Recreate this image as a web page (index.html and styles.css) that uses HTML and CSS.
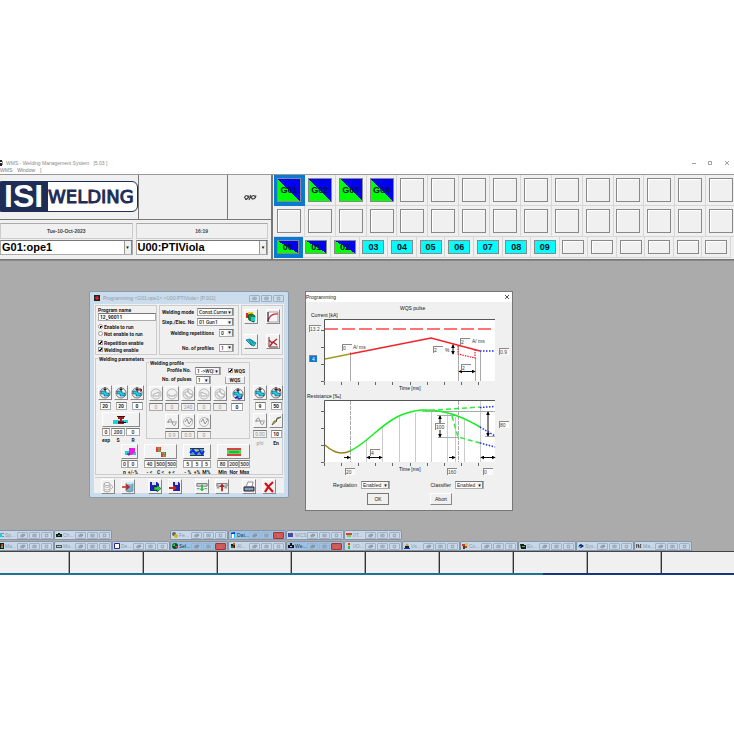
FILE: index.html
```html
<!DOCTYPE html>
<html lang="en">
<head>
<meta charset="utf-8">
<title>WMS - Welding Management System</title>
<link rel="stylesheet" href="styles.css">
</head>
<body>
<svg class="defs" aria-hidden="true">
  <symbol id="gun" viewBox="0 0 12 12"><circle cx="6" cy="6" r="5" fill="#f4f4f4" stroke="#555" stroke-width=".8"/><path d="M6 0v4M4.500 2.500h3" stroke="#222"/><path d="M2 4h5v2h3v3H5V7H2z" fill="#15d5dc" stroke="#126" stroke-width=".5"/></symbol>
  <symbol id="gun2" viewBox="0 0 12 12"><use href="#gun"/><path d="M3 10l2-1 2 2 3-1" stroke="#22d" fill="none" stroke-width="1.500"/></symbol>
  <symbol id="gun3" viewBox="0 0 12 12"><use href="#gun"/><path d="M6 3h5M9 1.500L11 3 9 4.500" stroke="#711" fill="none"/></symbol>
  <symbol id="ramp" viewBox="0 0 12 12"><circle cx="6" cy="6" r="5" fill="none" stroke="#aaa" stroke-width=".8"/><path d="M3 8h6V4L3 6.500z" fill="#fff" stroke="#999" stroke-width=".8"/></symbol>
  <symbol id="rampdown" viewBox="0 0 12 12"><circle cx="6" cy="6" r="5" fill="none" stroke="#aaa" stroke-width=".8"/><path d="M3 8h6L9 6.500 3 4z" fill="#fff" stroke="#999" stroke-width=".8"/></symbol>
  <symbol id="flat" viewBox="0 0 12 12"><circle cx="6" cy="6" r="5" fill="none" stroke="#aaa" stroke-width=".8"/><path d="M3 8V6M9 8V6M3 8h6" fill="none" stroke="#999" stroke-width=".8"/></symbol>
  <symbol id="dimgun" viewBox="0 0 12 12"><circle cx="6" cy="6" r="5" fill="none" stroke="#aaa" stroke-width=".8"/><path d="M6 1v3M3 4h4v2h3v3H5V7H3z" fill="#fff" stroke="#999" stroke-width=".8"/></symbol>
  <symbol id="wave" viewBox="0 0 12 12"><path d="M1 6h10M2 7q2-8 4-1t4 1" fill="none" stroke="#999"/></symbol>
  <symbol id="cycle" viewBox="0 0 12 12"><circle cx="6" cy="6" r="4.500" fill="none" stroke="#aaa" stroke-width=".8"/><path d="M3 6l2-3 2 5 2-3M8 3h2v2" fill="none" stroke="#888" stroke-width=".9"/></symbol>
  <symbol id="bolt" viewBox="0 0 12 12"><path d="M11 2L6 5l1 1-5 4 2-4 2 0L7 3z" fill="#e8d21a" stroke="#443" stroke-width=".7"/></symbol>
  <symbol id="valve" viewBox="0 0 24 12"><path d="M4 6h7v4H4zM13 6h6v3h-6z" fill="#15d5dc"/><path d="M9 3h6v2h-2v2h2v3H9V7h2V5H9z" fill="#a11b22"/><path d="M8 2.500h8M9 8.500h8" stroke="#311"/></symbol>
  <symbol id="pink" viewBox="0 0 12 12"><path d="M1 5h5v4H1zM9 6h3v3H9z" fill="#15d5dc"/><path d="M5 2h6v4L8 9H6l-2 1 1-4z" fill="#ec1ada"/><path d="M3 8h3" stroke="#224"/></symbol>
  <symbol id="steps" viewBox="0 0 24 12"><path d="M7 1h5v5H7z" fill="#e33"/><path d="M12 6h5v5h-5z" fill="#e33"/><path d="M8 2h3l-2 3h3M13 7h3l-2 3h3" fill="none" stroke="#3d6"/></symbol>
  <symbol id="tol" viewBox="0 0 24 12"><path d="M5 3h14v6H5z" fill="#42aeb2"/><path d="M5 2.500h14M5 9.500h14" stroke="#334"/><path d="M5 7l3-3 3 4 3-4 3 4 2-3" fill="none" stroke="#1a26ee" stroke-width="2"/><path d="M10 4l2 1 2-1" stroke="#fe0" fill="none"/></symbol>
  <symbol id="bars" viewBox="0 0 24 12"><path d="M5 2h14v2H5zM5 8h14v2H5z" fill="#d34442"/><path d="M5 4h14v4H5z" fill="#50db50"/><path d="M7 6h10" stroke="#185"/></symbol>
  <symbol id="cards" viewBox="0 0 12 12"><path d="M1 2h5v5H1z" fill="#e02727"/><path d="M3 1h5v4H3z" fill="#f3cb23"/><path d="M3 4l4-1 3 2-1 6-5-2z" fill="#168a38" stroke="#153"/><path d="M6 6h4v4H6z" fill="#14cbd4"/></symbol>
  <symbol id="graph" viewBox="0 0 12 12"><path d="M1 1v10h10V1z" fill="#f6f6fa" stroke="#777" stroke-width=".6"/><path d="M1 10Q3 2 11 3" fill="none" stroke="#d22" stroke-width="1.200"/><path d="M1 1v10" stroke="#225" fill="none"/></symbol>
  <symbol id="plane" viewBox="0 0 12 12"><path d="M1 4l4-1 6 4-2 3-3-1z" fill="#15cfda" stroke="#157" stroke-width=".7"/><path d="M4 4l3 5M6 4l3 4" stroke="#166" stroke-width=".7"/></symbol>
  <symbol id="redgraph" viewBox="0 0 12 12"><path d="M2 1v10h9" stroke="#633" fill="none"/><path d="M2 4l3 3 5-4M3 10l3-4 4 3" fill="none" stroke="#b11d22" stroke-width="1.300"/></symbol>
  <symbol id="db" viewBox="0 0 12 12"><path d="M2 3v7q3 2 6 0V3" fill="#fafafa" stroke="#aaa"/><ellipse cx="5" cy="3" rx="3" ry="1.500" fill="#fff" stroke="#aaa"/><path d="M2 5.500q3 2 6 0M2 8q3 2 6 0M9 4l2 2-2 2" stroke="#bbb" fill="none"/></symbol>
  <symbol id="dbin" viewBox="0 0 12 12"><path d="M4 2v8q3 2 7 0V2z" fill="#78b4d4" stroke="#478" stroke-width=".6"/><ellipse cx="7.500" cy="2" rx="3.500" ry="1.300" fill="#cce8f4"/><path d="M0 6h6M4 3.500L7 6 4 8.500" stroke="#c2261f" stroke-width="1.600" fill="none"/></symbol>
  <symbol id="diskout" viewBox="0 0 12 12"><path d="M1 1h7l2 2v7H1z" fill="#1722b8"/><path d="M3 1h4v3H3z" fill="#dde"/><path d="M5 6h3V4l4 3.500L8 11V9H5z" fill="#28d338" stroke="#131" stroke-width=".5"/></symbol>
  <symbol id="diskin" viewBox="0 0 12 12"><path d="M4 1h6l1 2v7H4z" fill="#1722b8"/><path d="M6 1h3v3H6z" fill="#dde"/><path d="M0 6h4V4l4 3-4 3V8H0z" fill="#d61f1f"/></symbol>
  <symbol id="down" viewBox="0 0 14 12"><path d="M1 2h12v3H1z" fill="#ddd" stroke="#333" stroke-width=".7"/><path d="M6 3h2v5h2l-3 3-3-3h2z" fill="#27b83c"/><path d="M1 8h3M10 8h3" stroke="#386"/></symbol>
  <symbol id="up" viewBox="0 0 14 12"><path d="M1 2h12v3H1z" fill="#ddd" stroke="#333" stroke-width=".7"/><path d="M6 11h2V6h2L7 2 4 6h2z" fill="#b61c1c"/><path d="M1 7h3M10 7h3" stroke="#464"/></symbol>
  <symbol id="print" viewBox="0 0 12 12"><path d="M5 1h5l-1 5H3z" fill="#fff" stroke="#667" stroke-width=".7"/><path d="M1 6h10v4H1z" fill="#889" stroke="#223"/><path d="M2 8h8" stroke="#7bd"/></symbol>
  <symbol id="cross" viewBox="0 0 12 12"><path d="M2 2l8 9M10 1q-5 4-8 10" stroke="#d0111b" stroke-width="2.200" fill="none"/></symbol>
  <symbol id="b-res" viewBox="0 0 8 6"><path d="M2 2.500h3v2H2zM3.500 2.500v-1h3v2H5" fill="none" stroke="#6f7c8a" stroke-width=".8"/></symbol>
  <symbol id="b-max" viewBox="0 0 8 6"><path d="M2 1.500h4v3H2zM3 3h2" fill="none" stroke="#7f8c9a" stroke-width=".8"/></symbol>
  <symbol id="b-cls" viewBox="0 0 8 6"><path d="M2.500 1.500h3v3h-3z" fill="none" stroke="#7f8c9a" stroke-width=".8"/></symbol>
  <marker id="ah" viewBox="0 0 6 6" refX="5" refY="3" markerWidth="4" markerHeight="4" orient="auto-start-reverse"><path d="M0 0l6 3-6 3z"/></marker>
</svg>

<div class="app">
  <header class="titlebar">
    <svg class="appicon" viewBox="0 0 4 6"><path d="M0 0h2v2H0zM0 3h2v3H0z" fill="#222"/><path d="M2 1h1v4H2z" fill="#999"/></svg>
    <span class="apptitle">WMS - Welding Management System&nbsp;&nbsp; [5.03 ]</span>
    <svg class="syscontrols" viewBox="0 0 40 6"><path d="M1 3.500h4M17.500 1.500h3v3h-3zM34 1l4 4M38 1l-4 4" fill="none" stroke="#888" stroke-width=".8"/></svg>
  </header>
  <nav class="menubar"><a href="#">WMS</a><a href="#">Window</a><a href="#">]</a></nav>

  <section class="head">
    <div class="head-left">
      <div class="brandrow">
        <div class="brand"><div class="logo"><b>ISI</b><span>WELDING</span></div></div>
        <div class="cell"></div>
        <div class="cell link"><svg viewBox="0 0 14 7"><path d="M1.500 3.500q2-4 4 0-2 3-4 0zM8 3.500q3-4 4.500 0-2 3-4.500 0zM6 6l2-5M2 5.500q3 0 4-4M9 5.500q3 0 4-4" fill="none" stroke="#444" stroke-width="1.200"/></svg></div>
      </div>
      <div class="inforow">
        <div class="info">Tue-10-Oct-2023</div><div class="info">16:19</div>
        <span class="combo big"><select aria-label="Group"><option>G01:ope1</option></select></span>
        <span class="combo big"><select aria-label="Unit"><option>U00:PTIViola</option></select></span>
      </div>
    </div>
    <div class="head-right">
      <div class="slots">
        <div class="sel"><button class="on">G01</button></div><div><button class="on">G02</button></div><div><button class="on">G03</button></div><div><button class="on">G04</button></div><div><button></button></div><div><button></button></div><div><button></button></div><div><button></button></div><div><button></button></div><div><button></button></div><div><button></button></div><div><button></button></div><div><button></button></div><div><button></button></div><div><button></button></div>
        <div><button></button></div><div><button></button></div><div><button></button></div><div><button></button></div><div><button></button></div><div><button></button></div><div><button></button></div><div><button></button></div><div><button></button></div><div><button></button></div><div><button></button></div><div><button></button></div><div><button></button></div><div><button></button></div><div><button></button></div>
      </div>
      <div class="units">
        <div class="sel"><button class="on">00</button></div><div><button class="on">01</button></div><div><button class="on">02</button></div><div><button class="cy">03</button></div><div><button class="cy">04</button></div><div><button class="cy">05</button></div><div><button class="cy">06</button></div><div><button class="cy">07</button></div><div><button class="cy">08</button></div><div><button class="cy">09</button></div><div><button></button></div><div><button></button></div><div><button></button></div><div><button></button></div><div><button></button></div><div><button></button></div>
      </div>
    </div>
  </section>

  <main class="desk">
    <section class="win prog">
      <header class="wtitle"><svg viewBox="0 0 6 6"><path d="M0 0h6v6H0z" fill="#222"/><path d="M1 2l3-1 1 3-3 1z" fill="#d22"/></svg><span>Programming &lt;G01:ope1&gt; &lt;U00:PTIViola&gt; [P.001]</span><i><svg><use href="#b-max"/></svg></i><i><svg><use href="#b-max"/></svg></i><i><svg><use href="#b-cls"/></svg></i></header>
      <div class="pbody">
        <div class="top">
          <div class="box ident">
            <label for="pn">Program name</label>
            <input id="pn" value="12_90011">
            <label class="opt"><input type="radio" name="en" checked>Enable to run</label>
            <label class="opt"><input type="radio" name="en">Not enable to run</label>
            <label class="opt gap"><input type="checkbox" checked>Repetition enable</label>
            <label class="opt"><input type="checkbox" checked>Welding enable</label>
          </div>
          <div class="box modes">
            <label class="m0">Welding mode<span class="combo w37"><select><option>Const.Current</option></select></span></label>
            <label class="m0">Step./Elec. No<span class="combo w37"><select><option>01 Gun1</option></select></span></label>
            <label>Welding repetitions<span class="combo w15"><select><option>0</option></select></span></label>
            <label class="last">No. of profiles<span class="combo w15"><select><option>1</option></select></span></label>
          </div>
          <div class="box shortcuts">
            <button class="ib" aria-label="Programs"><svg><use href="#cards"/></svg></button><button class="ib" aria-label="Curve"><svg><use href="#graph"/></svg></button>
            <button class="ib" aria-label="Guns"><svg><use href="#plane"/></svg></button><button class="ib" aria-label="Limits"><svg><use href="#redgraph"/></svg></button>
          </div>
        </div>

        <fieldset class="params">
          <legend>Welding parameters</legend>
          <div class="prow">
            <div class="pleft">
              <div class="trip">
                <button class="ib" aria-label="Squeeze"><svg><use href="#gun"/></svg></button><button class="ib" aria-label="Pressure"><svg><use href="#gun"/></svg></button><button class="ib" aria-label="Hold"><svg><use href="#gun3"/></svg></button>
                <input aria-label="Squeeze time" value="20"><input aria-label="Pressure time" value="20"><input aria-label="Hold time" value="0">
              </div>
              <div class="valve">
                <button class="ib wide" aria-label="Valve"><svg><use href="#valve"/></svg></button>
                <input aria-label="exp" value="0"><input aria-label="S" value="200"><input aria-label="R" value="0">
                <span>exp</span><span>S</span><span>R</span>
              </div>
            </div>
            <fieldset class="profile">
              <legend>Welding profile</legend>
              <div class="pf"><label>Profile No.<span class="combo w25"><select><option>1 -&gt;WQS</option></select></span></label><label class="opt"><input type="checkbox" checked>WQS</label></div>
              <div class="pf"><label>No. of pulses<span class="combo w15"><select><option>1</option></select></span></label><button class="wqs">WQS</button></div>
              <div class="six">
                <button class="ib" aria-label="Upslope"><svg><use href="#ramp"/></svg></button><button class="ib" aria-label="Pre"><svg><use href="#flat"/></svg></button><button class="ib" aria-label="Weld"><svg><use href="#dimgun"/></svg></button><button class="ib" aria-label="Downslope"><svg><use href="#rampdown"/></svg></button><button class="ib" aria-label="Post"><svg><use href="#dimgun"/></svg></button><button class="ib" aria-label="Cold"><svg><use href="#gun2"/></svg></button>
                <input class="dim" aria-label="Up" value="0"><input class="dim" aria-label="Pre time" value="0"><input class="dim" aria-label="Weld time" value="240"><input class="dim" aria-label="Down" value="0"><input class="dim" aria-label="Post time" value="0"><input aria-label="Cold time" value="0">
              </div>
              <div class="six second">
                <i></i><button class="ib" aria-label="Wave"><svg><use href="#wave"/></svg></button><button class="ib" aria-label="Cycle"><svg><use href="#cycle"/></svg></button><button class="ib" aria-label="Current"><svg><use href="#cycle"/></svg></button><i></i><i></i>
                <i></i><input class="dim" aria-label="kA" value="0.9"><input class="dim" aria-label="kA end" value="0.0"><input class="dim" aria-label="Cycles" value="0"><i></i><i></i>
              </div>
            </fieldset>
            <div class="pright">
              <button class="ib" aria-label="Hold gun"><svg><use href="#gun"/></svg></button><button class="ib" aria-label="Release gun"><svg><use href="#gun3"/></svg></button>
              <input aria-label="Hold gun time" value="9"><input aria-label="Release time" value="50">
              <button class="ib r2" aria-label="Phase"><svg><use href="#wave"/></svg></button><button class="ib r2" aria-label="Energy"><svg><use href="#bolt"/></svg></button>
              <input class="dim" aria-label="phi" value="0.00"><input aria-label="En" value="10">
              <span class="dim">phi</span><span>En</span>
            </div>
          </div>
          <div class="limits">
            <div class="lim two"><button class="ib wide" aria-label="Offset"><svg><use href="#pink"/></svg></button><input aria-label="n" value="0"><input aria-label="plus minus" value="0"><span>n</span><span>+/-%</span></div>
            <div class="lim"><button class="ib wide" aria-label="Steps"><svg><use href="#steps"/></svg></button><input aria-label="C minus" value="40"><input aria-label="C" value="500"><input aria-label="C plus" value="500"><span>- &lt;</span><span>C &lt;</span><span>+ &lt;</span></div>
            <div class="lim"><button class="ib wide" aria-label="Tolerance"><svg><use href="#tol"/></svg></button><input aria-label="minus" value="5"><input aria-label="plus" value="5"><input aria-label="M" value="5"><span>- %</span><span>+%</span><span>M%</span></div>
            <div class="lim"><button class="ib wide" aria-label="Range"><svg><use href="#bars"/></svg></button><input aria-label="Min" value="80"><input aria-label="Nor" value="200"><input aria-label="Max" value="500"><span>Min</span><span>Nor</span><span>Max</span></div>
          </div>
        </fieldset>

        <div class="tools">
          <div><button class="ib" aria-label="Database"><svg><use href="#db"/></svg></button><button class="ib" aria-label="Load"><svg><use href="#dbin"/></svg></button></div>
          <div><button class="ib" aria-label="Export"><svg><use href="#diskout"/></svg></button><button class="ib" aria-label="Import"><svg><use href="#diskin"/></svg></button></div>
          <div><button class="ib" aria-label="Download"><svg><use href="#down"/></svg></button><button class="ib" aria-label="Upload"><svg><use href="#up"/></svg></button></div>
          <div><button class="ib" aria-label="Print"><svg><use href="#print"/></svg></button><button class="ib" aria-label="Cancel"><svg><use href="#cross"/></svg></button></div>
        </div>
      </div>
    </section>

    <section class="win dlg">
      <header class="dtitle"><span>Programming</span><svg viewBox="0 0 6 6"><path d="M1 1l4 4M5 1L1 5" stroke="#222" stroke-width=".8"/></svg></header>
      <div class="chart">
        <svg viewBox="306 302 206 89">
          <path d="M325 320H495V381H325z" fill="#fff"/>
          <path d="M350.500 352v29M458.500 346v35M475.500 358v23M480.500 351v30" stroke="#aaa"/>
          <path d="M324.500 381.500v-62H495" fill="none" stroke="#555"/>
          <path d="M321 330.500h3M321 347.500h3M321 364.500h3M321 381.500h3M324.500 382v3M341.500 382v3M358.500 382v3M375.500 382v3M392.500 382v3M410.500 382v3M427.500 382v3M444.500 382v3M461.500 382v3M478.500 382v3" stroke="#666"/>
          <path d="M325 329H495" stroke="#ff7474" stroke-width="2" stroke-dasharray="13 4"/>
          <path d="M325 359l25-5" stroke="#a09a1c" stroke-width="1.500"/>
          <path d="M350 354l81-16 49 13" fill="none" stroke="#f4202a" stroke-width="1.500"/>
          <path d="M458 346v8l17 4v-8" fill="none" stroke="#f4202a" stroke-width="1.200" stroke-dasharray="1.500 1"/>
          <path d="M480 351h15" stroke="#2233f5" stroke-dasharray="1.500 1.500" stroke-width="1.300"/>
          <path class="arrow both" d="M453 345v9"/><path class="arrow both" d="M459 371.500h16"/>
          <g class="t"><text x="400" y="310">WQS pulse</text><text x="311" y="317">Current [kA]</text><text x="399" y="390">Time [ms]</text></g>
          <g class="s"><text x="353" y="349">A/ ms</text><text x="472" y="343">A/ ms</text><text x="445" y="352">%</text></g>
        </svg>
        <input class="f c1" aria-label="Maximum current" value="13.2"><input class="f c2" aria-label="Start current" value="4"><input class="f c3" aria-label="Rise" value="0"><input class="f c4" aria-label="Band" value="2"><input class="f c5" aria-label="Fall" value="2"><input class="f c6" aria-label="Duration" value="2"><input class="f c7" aria-label="End current" value="0.9">
      </div>
      <div class="chart">
        <svg viewBox="306 391 206 84">
          <path d="M325 401H495V462H325z" fill="#fff"/>
          <path d="M366.500 440v22M382.500 427v35M399.500 417v45M415.500 413v49M431.500 411v51M447.500 414v48M455.500 417v45M464.500 420v42M480.500 401v61" stroke="#ccc"/>
          <path d="M350.500 401v61M458.500 401v61" stroke="#aaa" stroke-dasharray="4 1"/>
          <path d="M425 411.500h70M437 415.500h18M438 437.500h20M485 436.500h10" stroke="#aaa"/>
          <path d="M324.500 462.500v-62H495" fill="none" stroke="#555"/>
          <path d="M321 411.500h3M321 428.500h3M321 445.500h3M321 462.500h3M324.500 463v3M341.500 463v3M358.500 463v3M375.500 463v3M392.500 463v3M410.500 463v3M427.500 463v3M444.500 463v3M461.500 463v3M478.500 463v3" stroke="#666"/>
          <path d="M325 445q13 12 25 6" fill="none" stroke="#978418" stroke-width="1.500"/>
          <path d="M350 451C366 444 379 426 397 417S430 409 444 412S470 421 480 427" fill="none" stroke="#15f020" stroke-width="1.500"/>
          <path d="M422 411l58-4M452 416l6 21 22 6" fill="none" stroke="#31ea3b" stroke-width="1.500" stroke-dasharray="5 3"/>
          <path d="M480 407.500l15-1M480 427l15 9M480 443l15 4" stroke="#2233f5" stroke-width="1.500" stroke-dasharray="1.500 1.500"/>
          <path class="arrow both" d="M440 416v21"/><path class="arrow both" d="M488 412v24"/><path class="arrow both" d="M367 457.500h15"/><path class="arrow both" d="M481 457.500h14"/>
          <path class="arrow" d="M344 457.500h6"/><path class="arrow" d="M449 457.500h6"/>
          <g class="t"><text x="307" y="398">Resistance [‰]</text><text x="399" y="471">Time [ms]</text></g>
        </svg>
        <input class="f r1" aria-label="Start window" value="20"><input class="f r2" aria-label="Step" value="4"><input class="f r3" aria-label="Drop" value="100"><input class="f r4" aria-label="Drop time" value="160"><input class="f r5" aria-label="Tail" value="0"><input class="f r6" aria-label="Tolerance" value="80">
      </div>
      <div class="dform"><label>Regulation<span class="combo w29"><select><option>Enabled</option></select></span></label><label>Classifier<span class="combo w29"><select><option>Enabled</option></select></span></label></div>
      <div class="dbtns"><button class="ok">OK</button><button>Abort</button></div>
    </section>

    <div class="mdis">
      <div class="mdi"><svg viewBox="0 0 6 6"><path d="M1 1h5v1H1z" fill="#e55"/><path d="M1 4h5v1H1z" fill="#1bc"/><path d="M2 1h2v4H2z" fill="#2cd"/></svg><span>Sp...</span><i><svg><use href="#b-res"/></svg></i><i><svg><use href="#b-max"/></svg></i><i><svg><use href="#b-cls"/></svg></i></div>
      <div class="mdi"><svg viewBox="0 0 6 6"><path d="M0 2h6v3H0zM2 1h2v1H2z" fill="#121"/><path d="M2 3h2v1H2z" fill="#3a6"/></svg><span>Ch...</span><i><svg><use href="#b-res"/></svg></i><i><svg><use href="#b-max"/></svg></i><i><svg><use href="#b-cls"/></svg></i></div>
      <div class="none"></div>
      <div class="mdi"><svg viewBox="0 0 6 6"><circle cx="2" cy="2" r="2" fill="#665"/><circle cx="4" cy="4" r="2" fill="#cb2"/></svg><span>Fe...</span><i><svg><use href="#b-res"/></svg></i><i><svg><use href="#b-max"/></svg></i><i><svg><use href="#b-cls"/></svg></i></div>
      <div class="mdi act"><svg viewBox="0 0 6 6"><path d="M1 0h4v6H1z" fill="#1ce"/><path d="M2 2h2v4H2z" fill="#fff"/><path d="M1 1l4-1v2H1z" fill="#13d"/></svg><span>Dat...</span><i><svg><use href="#b-res"/></svg></i><i><svg><use href="#b-max"/></svg></i><i><svg><use href="#b-cls"/></svg></i></div>
      <div class="mdi"><svg viewBox="0 0 6 6"><path d="M0 1h5v4H0z" fill="#15c"/><path d="M0 1h2l3 3v1z" fill="#d23"/></svg><span>WCS</span><i><svg><use href="#b-res"/></svg></i><i><svg><use href="#b-max"/></svg></i><i><svg><use href="#b-cls"/></svg></i></div>
      <div class="mdi"><svg viewBox="0 0 6 6"><path d="M0 1h6v2H0z" fill="#e33"/><path d="M1 3h4v2H1z" fill="#6d5"/></svg><span>I/T...</span><i><svg><use href="#b-res"/></svg></i><i><svg><use href="#b-max"/></svg></i><i><svg><use href="#b-cls"/></svg></i></div>
      <div class="none"></div><div class="none"></div><div class="none"></div><div class="none"></div><div class="none"></div>
      <div class="mdi"><svg viewBox="0 0 6 6"><path d="M0 0h6v6H0z" fill="#121"/><path d="M3 1h2v2H3z" fill="#d33"/><path d="M3 3h2v2H3z" fill="#4b4"/></svg><span>Ma...</span><i><svg><use href="#b-res"/></svg></i><i><svg><use href="#b-max"/></svg></i><i><svg><use href="#b-cls"/></svg></i></div>
      <div class="mdi"><svg viewBox="0 0 6 6"><path d="M0 2h6v3H0z" fill="#456"/><path d="M1 3h4v1H1z" fill="#cca"/></svg><span>Mo...</span><i><svg><use href="#b-res"/></svg></i><i><svg><use href="#b-max"/></svg></i><i><svg><use href="#b-cls"/></svg></i></div>
      <div class="mdi"><svg viewBox="0 0 6 6"><path d="M.500 .500h5v5h-5z" fill="#fff" stroke="#22a"/></svg><span>De...</span><i><svg><use href="#b-res"/></svg></i><i><svg><use href="#b-max"/></svg></i><i><svg><use href="#b-cls"/></svg></i></div>
      <div class="mdi act"><svg viewBox="0 0 6 6"><circle cx="3" cy="3" r="3" fill="#142"/><path d="M3 0v3H0z" fill="#2c6"/><path d="M3 3h3L4 5z" fill="#e44"/></svg><span>Sel...</span><i><svg><use href="#b-res"/></svg></i><i><svg><use href="#b-max"/></svg></i><i><svg><use href="#b-cls"/></svg></i></div>
      <div class="mdi"><svg viewBox="0 0 6 6"><path d="M1 1h4v4H1z" fill="#221"/><path d="M3 0h2v2H3z" fill="#d52"/><path d="M1 3h3v2H1z" fill="#363"/></svg><span>Al...</span><i><svg><use href="#b-res"/></svg></i><i><svg><use href="#b-max"/></svg></i><i><svg><use href="#b-cls"/></svg></i></div>
      <div class="mdi act"><svg viewBox="0 0 6 6"><path d="M0 2h6v3H0zM2 0h2v2H2z" fill="#112"/><path d="M2 3h2v1H2z" fill="#ccd"/></svg><span>We...</span><i><svg><use href="#b-res"/></svg></i><i><svg><use href="#b-max"/></svg></i><i><svg><use href="#b-cls"/></svg></i></div>
      <div class="mdi"><svg viewBox="0 0 6 6"><path d="M2 0h2v2H2z" fill="#e33"/><path d="M2 2h2v1H2z" fill="#dc3"/><path d="M2 3h2v3H2z" fill="#3b4"/></svg><span>I/O...</span><i><svg><use href="#b-res"/></svg></i><i><svg><use href="#b-max"/></svg></i><i><svg><use href="#b-cls"/></svg></i></div>
      <div class="mdi"><svg viewBox="0 0 6 6"><circle cx="3" cy="2" r="1.500" fill="#c96"/><path d="M0 5h6v1H0z" fill="#13c"/><path d="M1 3h4v2H1z" fill="#122"/></svg><span>Us...</span><i><svg><use href="#b-res"/></svg></i><i><svg><use href="#b-max"/></svg></i><i><svg><use href="#b-cls"/></svg></i></div>
      <div class="mdi"><svg viewBox="0 0 6 6"><path d="M0 1h3v2H0z" fill="#d33"/><path d="M3 0h3v3H3z" fill="#dc3"/><path d="M1 3h2v3H1z" fill="#343"/><path d="M3 3h2v2H3z" fill="#c42"/></svg><span>Co...</span><i><svg><use href="#b-res"/></svg></i><i><svg><use href="#b-max"/></svg></i><i><svg><use href="#b-cls"/></svg></i></div>
      <div class="mdi"><svg viewBox="0 0 6 6"><path d="M0 1h4v1h2v4H1z" fill="#121"/><path d="M2 3h3v1H2z" fill="#797"/></svg><span>Ex...</span><i><svg><use href="#b-res"/></svg></i><i><svg><use href="#b-max"/></svg></i><i><svg><use href="#b-cls"/></svg></i></div>
      <div class="mdi"><svg viewBox="0 0 6 6"><path d="M1 2l2-1 3 2-3 2-2-1z" fill="#126"/><path d="M0 3h3v1H0z" fill="#2ad"/></svg><span>Sys...</span><i><svg><use href="#b-res"/></svg></i><i><svg><use href="#b-max"/></svg></i><i><svg><use href="#b-cls"/></svg></i></div>
      <div class="mdi"><svg viewBox="0 0 6 6"><path d="M0 1l1 2-1 2M2 1l1 4M5 1l-1 2 1 2" fill="none" stroke="#333"/></svg><span>Ma...</span><i><svg><use href="#b-res"/></svg></i><i><svg><use href="#b-max"/></svg></i><i><svg><use href="#b-cls"/></svg></i></div>
    </div>
  </main>
  <footer class="keys"><button aria-label="F1"></button><button aria-label="F2"></button><button aria-label="F3"></button><button aria-label="F4"></button><button aria-label="F5"></button><button aria-label="F6"></button><button aria-label="F7"></button><button aria-label="F8"></button><button aria-label="F9"></button><button aria-label="F10"></button></footer>
  <div class="edge"></div>
</div>
</body>
</html>
```
FILE: styles.css
```css
* { box-sizing: border-box; }
body { margin: 0; background: #fff; font: 5px/6px "Liberation Sans", sans-serif; color: #222; }
button, input, select { font: inherit; color: inherit; margin: 0; padding: 0; border-radius: 0; }
i { font-style: normal; }
.defs { position: absolute; width: 0; height: 0; }
.app { padding-top: 158px; overflow: hidden; }

.titlebar { display: flex; align-items: center; gap: 2px; height: 9px; color: #8a8a8a; }
.appicon { width: 4px; height: 6px; }
.apptitle { flex: 1; font-family: "Liberation Sans", sans-serif; }
.syscontrols { width: 40px; height: 6px; margin-right: 3px; }
.menubar { display: flex; gap: 5px; height: 7px; }
.menubar a { color: #777; text-decoration: none; }

.head { display: flex; height: 86px; background: #f0f0f0; border-top: 1px solid #999; border-bottom: 1px solid #777; }
.head-left { flex: none; width: 273px; display: flex; flex-direction: column; border-right: 2px solid #777; }
.brandrow { display: flex; height: 45px; border-bottom: 1px solid #777; }
.brand { width: 139px; border-right: 1px solid #777; padding-top: 6px; }
.logo { display: flex; align-items: center; height: 31px; margin-left: -4px; border: 1px solid #1e2c56; border-radius: 6px; background: #fff; color: #1e2c56; }
.logo b { width: 51px; height: 29px; padding-left: 7px; border-radius: 4px 0 0 4px; background: #1e2c56; color: #fff; font-size: 32px; line-height: 29px; }
.logo span { font: 18px/30px "DejaVu Sans", sans-serif; -webkit-text-stroke: 1px #1e2c56; }
.cell { width: 89px; border-right: 1px solid #777; }
.cell.link { flex: 1; border: 0; display: flex; align-items: center; justify-content: center; }
.link svg { width: 14px; height: 7px; }
.inforow { display: grid; grid-template-columns: 1fr 1fr; grid-template-rows: 16px 15px; gap: 1px 3px; padding: 3px 3px 0 0; }
.info { border: 1px solid #ccc; border-top-color: #aaa; text-align: center; line-height: 14px; font-weight: bold; color: #444; }

.combo { position: relative; display: inline-flex; height: 8px; background: #fff; border: 1px solid #aaa; border-top-color: #777; }
.combo select { appearance: none; width: 100%; border: 0; background: transparent; padding-left: 1px; line-height: 6px; }
.combo::after { content: "▾"; position: absolute; right: 0; top: 0; bottom: 0; width: 5px; display: flex; align-items: center; justify-content: center; background: #f0f0f0; border-right: 1px solid #888; font: 5px/5px "DejaVu Sans", sans-serif; color: #000; pointer-events: none; }
.combo.big { height: 15px; font-size: 11px; font-weight: bold; color: #000; }
.combo.big::after { border-left: 1px solid #999; width: 6px; }
.combo.big select { line-height: 13px; }
.w37 { width: 37px; } .w29 { width: 29px; } .w25 { width: 26px; } .w15 { width: 15px; }

.head-right { flex: 1; min-width: 0; padding-left: 1px; }
.slots { display: grid; grid-template-columns: repeat(15, 1fr); grid-auto-rows: 31px; margin-right: -3px; }
.units { display: grid; grid-template-columns: repeat(16, 1fr); grid-auto-rows: 21px; margin-right: 3px; }
.slots > div, .units > div { display: flex; align-items: center; justify-content: center; border: solid #d6d6d6; border-width: 0 1px 1px 0; }
.slots button { width: 24px; height: 24px; }
.units button { width: 22px; height: 14px; }
.slots button, .units button { border: 1px solid #888; background: #f0f0f0; box-shadow: inset 1px 1px #fff; font: bold 9px/10px "Liberation Sans", sans-serif; color: #012; }
.slots button.on, .units button.on { background: linear-gradient(to top right, #0f0 50%, #0000f5 50%); box-shadow: none; color: #00163c; }
.units button.cy { background: #0ff; box-shadow: none; }
.slots .sel, .units .sel { background: #0b78d2; border-color: #0b78d2; }

.desk { position: relative; height: 291px; background: #ababab; border-top: 1px solid #888; overflow: hidden; display: flex; flex-direction: column; justify-content: flex-end; }
.win { position: absolute; top: 30px; }
.prog { left: 89px; width: 200px; padding: 0 4px 4px; background: #cbdcec; border: 1px solid #8a9aab; border-radius: 2px; }
.wtitle { display: flex; align-items: center; height: 12px; gap: 1px; color: #8f9baa; }
.wtitle > svg { width: 6px; height: 6px; }
.wtitle span { flex: 1; padding-left: 2px; white-space: nowrap; }
.wtitle i { width: 11px; height: 7px; border: 1px solid #9fb0c2; border-radius: 1px; }
.wtitle i svg { display: block; width: 9px; height: 5px; }
.pbody { background: #f0f0f0; font-weight: bold; height: 189px; padding: 1px; font-family: Roboto, "Liberation Sans", sans-serif; }
.pbody input { background: #fff; border: 1px solid #aaa; border-top-color: #777; height: 8px; min-width: 0; width: 100%; text-align: center; line-height: 6px; }
.pbody select, .pbody .lim input, .pbody .valve input { font-weight: 500; }
.top { display: grid; grid-template-columns: 62px 1fr 42px; gap: 2px; height: 49px; }
.box { border: 1px solid #ccc; }
.ident { display: flex; flex-direction: column; padding: 1px 2px; }
.ident > label:first-child { line-height: 6px; }
#pn { text-align: left; padding-left: 1px; width: 58px; flex: none; margin-bottom: 2px; }
.opt { display: flex; align-items: center; gap: 1px; height: 7px; }
.opt.gap { margin-top: 2px; }
.pbody .opt input { appearance: none; flex: none; width: 5px; height: 5px; border: 1px solid #999; }
.pbody .opt input[type=radio] { border-radius: 50%; }
.pbody .opt input[type=radio]:checked { background: radial-gradient(circle, #111 1px, #fff 1px); }
.pbody .opt input[type=checkbox]:checked { background: linear-gradient(135deg, #fff 40%, #111 40%, #111 70%, #fff 70%); }
.modes { display: flex; flex-direction: column; justify-content: space-between; padding: 2px 4px; }
.modes label { display: flex; justify-content: flex-end; align-items: center; gap: 5px; }
.modes .m0 { justify-content: space-between; gap: 0; padding-left: 0; white-space: nowrap; margin-left: -2px; }
.modes .last { margin-top: 5px; }
.shortcuts { display: grid; grid-template-columns: 14px 14px; gap: 10px 8px; padding: 3px 2px; align-content: start; }

.ib { display: flex; align-items: center; justify-content: center; width: 14px; height: 15px; background: #f2f2f2; border: solid; border-width: 1px; border-color: #fff #888 #888 #fff; }
.ib svg { width: 12px; height: 12px; flex: none; }
.ib.wide { width: 100%; }
.ib.wide svg { width: 24px; }
.two .ib.wide svg { width: 14px; }

.params { position: relative; margin: 4px 0 0; border: 1px solid #ccc; padding: 0; height: 117px; min-width: 0; }
.params legend { position: absolute; top: -3px; left: 2px; padding: 0 1px; background: #f0f0f0; line-height: 6px; }
.prow { display: grid; grid-template-columns: 50px 104px 1fr; height: 83px; padding-top: 3px; }
.trip { display: grid; grid-template-columns: repeat(3, 14px); gap: 2px; padding: 23px 0 0 2px; }
.trip input, .pright input { width: 11px; justify-self: center; }
.valve { display: grid; grid-template-columns: 8px 14px 14px; gap: 1px; padding: 2px 0 0 6px; text-align: center; }
.valve .ib, .lim .ib { grid-column: 1 / -1; }
.valve input { justify-self: stretch; }
.profile { position: relative; margin: 0; padding: 4px 2px 0; border: 1px solid #ccc; height: 77px; min-width: 0; }
.profile legend { left: 2px; }
.pf { display: flex; justify-content: space-between; height: 9px; padding-right: 2px; }
.pf > label:first-child { display: flex; align-items: flex-start; gap: 4px; width: 72px; padding-left: 18px; white-space: nowrap; }
.pf + .pf > label:first-child { padding-left: 13px; }
.wqs { width: 20px; height: 8px; border: 1px solid #aaa; border-top-color: #fff; background: #f0f0f0; line-height: 6px; }
.six { display: grid; grid-template-columns: repeat(5, 14px) 14px; gap: 2px; padding-top: 1px; }
.six > :nth-child(6n) { margin-left: 2px; }
.six > input:nth-child(6n) { width: 12px; }
.six.second { padding-top: 3px; }
.pbody .dim { color: #999; background: #f0f0f0; font-weight: normal; }
.pright { display: grid; grid-template-columns: 14px 14px; gap: 2px; padding: 23px 0 0 3px; align-content: start; justify-content: start; text-align: center; }
.pright .r2 { margin-top: 1px; }
.pbody .pright .dim { width: 14px; }
.limits { display: grid; grid-template-columns: 17px 33px 28px 33px; justify-content: start; column-gap: 6px; padding: 2px 0 0 25px; }
.limits .lim { display: grid; grid-template-columns: repeat(3, 1fr); row-gap: 1px; text-align: center; }
.limits .two { grid-template-columns: 1fr 1fr; }
.lim span { white-space: nowrap; justify-self: center; }
.tools { display: flex; gap: 13px; margin-top: 2px; border-top: 1px solid #ccc; padding: 1px 0 0 6px; }
.tools div { display: flex; gap: 6px; }

.dlg { left: 305px; width: 208px; border: 1px solid #777; background: #f0f0f0; }
.dtitle { display: flex; justify-content: space-between; align-items: center; height: 10px; padding: 0 2px 0 0; background: #fff; }
.dtitle svg { width: 6px; height: 6px; }
.chart { position: relative; }
.chart svg { display: block; width: 100%; }
.chart .t { font-size: 5px; fill: #111; }
.chart .s { font-size: 5px; fill: #333; }
.arrow { stroke: #111; fill: none; marker-end: url(#ah); }
.arrow.both { marker-start: url(#ah); }
.f { position: absolute; width: 10px; height: 7px; border: solid #888; border-width: 1px 0 0 1px; background: #fafafa; line-height: 6px; color: #444; }
.c1 { left: 3px; top: 23px; width: 12px; } .c2 { left: 3px; top: 53px; background: #0b78d2; color: #fff; width: 8px; padding-left: 2px; }
.c3 { left: 36px; top: 42px; } .c4 { left: 127px; top: 44px; } .c5 { left: 154px; top: 36px; } .c6 { left: 155px; top: 62px; } .c7 { left: 193px; top: 46px; }
.r1 { left: 39px; top: 77px; } .r2.f { left: 64px; top: 58px; } .r3 { left: 129px; top: 32px; } .r4 { left: 141px; top: 77px; } .r5 { left: 177px; top: 77px; } .r6 { left: 193px; top: 30px; }
.dform { display: flex; justify-content: space-between; padding: 6px 28px 0 27px; }
.dform label { display: flex; align-items: center; gap: 0; }
.dform .combo { margin-left: -1px; }
.dform label .combo { margin-left: 0; }
.dform label { gap: 4px; }
.dbtns { display: flex; gap: 41px; padding: 4px 0 5px 61px; }
.dbtns button { width: 22px; height: 12px; background: #f0f0f0; border: 1px solid #888; border-color: #fff #888 #888 #fff; }
.dbtns .ok { border-color: #777; }

.mdis { display: grid; grid-template-columns: repeat(12, 58px); grid-auto-rows: 10px; row-gap: 1px; margin-left: -4px; }
.mdi { display: flex; align-items: center; gap: 1px; padding: 0 1px; background: #c8d8e8; border: 1px solid #8796a6; border-radius: 2px 2px 0 0; }
.mdi > svg { width: 6px; height: 6px; flex: none; }
.mdi span { flex: 1; color: #8d9aa9; white-space: nowrap; min-width: 0; }
.mdi i { width: 11px; height: 7px; border: 1px solid #a2b2c4; border-radius: 1px; flex: none; }
.mdi i svg { display: block; width: 9px; height: 5px; }
.mdi.act { background: #9dc1e2; }
.mdi.act span { color: #234; }
.mdi.act i:last-child { background: #d9544f; border-color: #a33; }

.keys { display: grid; grid-template-columns: repeat(10, 1fr); height: 22px; margin: 0 -2px 0 -4px; border-top: 1px solid #444; }
.keys button { border: 0; border-right: 1px solid #333; background: #f0f0f0; box-shadow: inset -1px 0 #aaa; }
.keys button:last-child { border: 0; }
.edge { height: 2px; background: linear-gradient(to right, #1d7397 74%, #17367f 74%); }
```
